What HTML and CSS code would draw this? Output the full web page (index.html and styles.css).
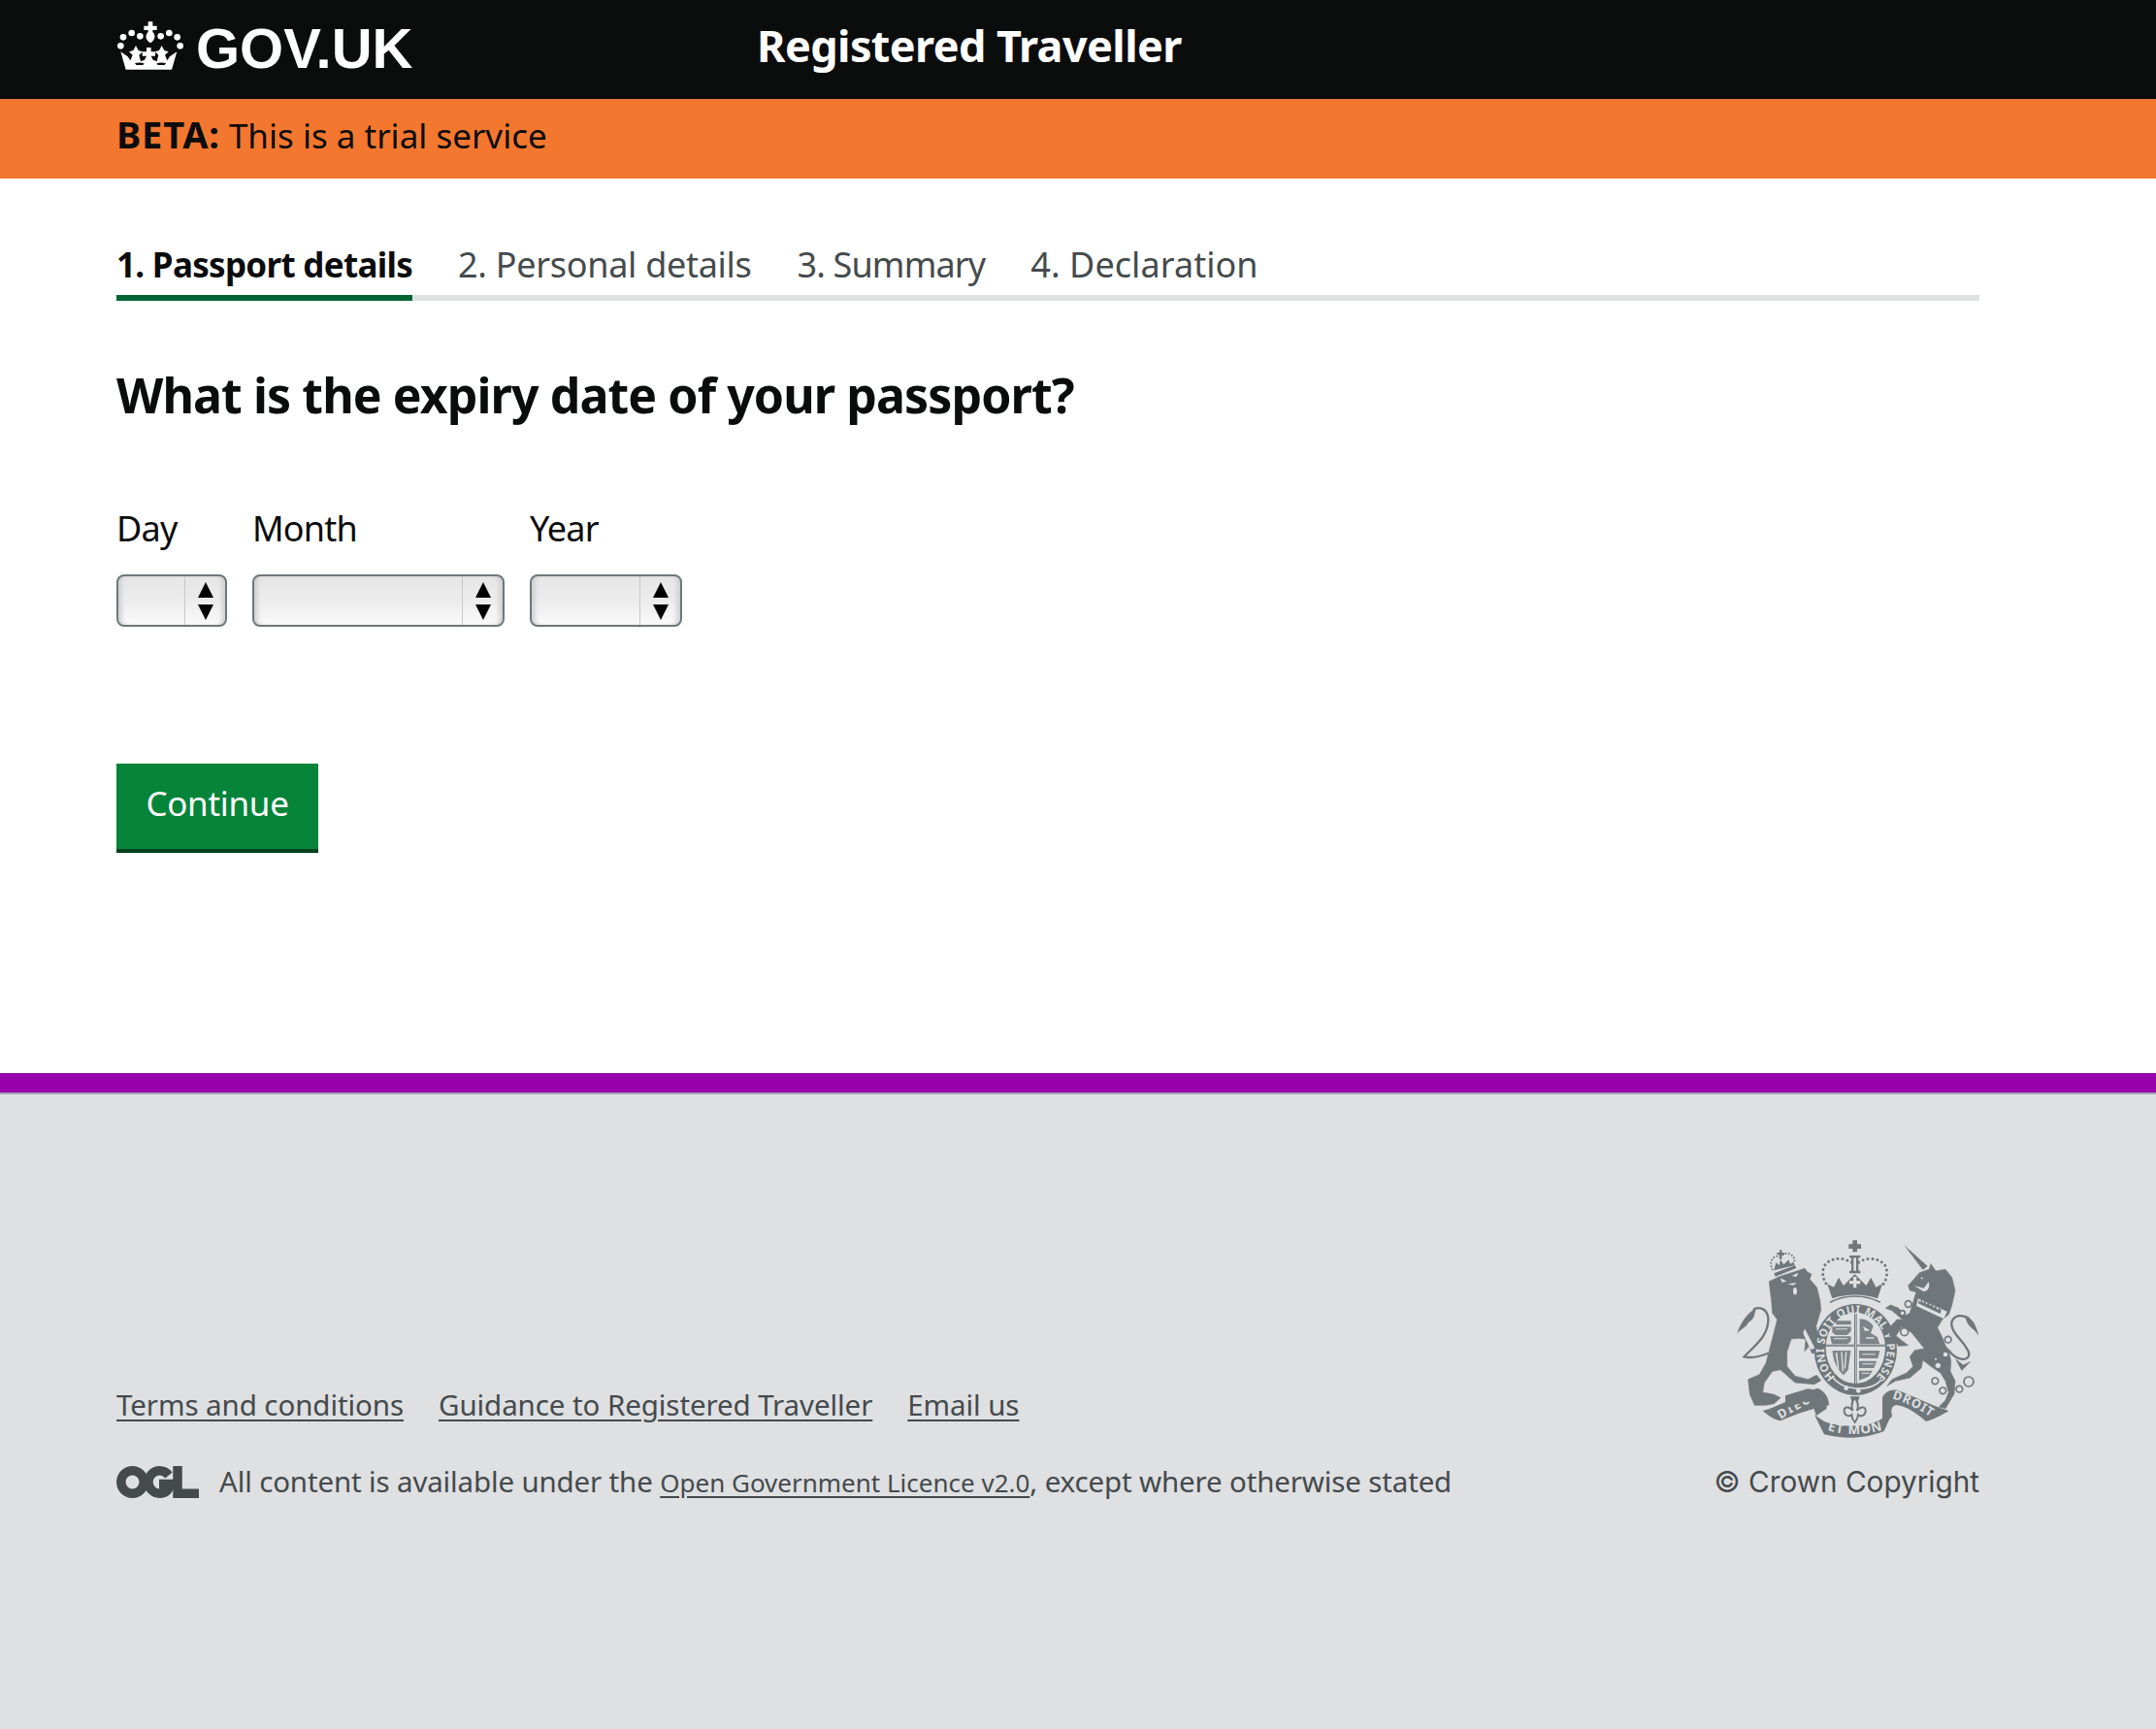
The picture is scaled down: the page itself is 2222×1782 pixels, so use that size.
FILE: index.html
```html
<!DOCTYPE html>
<html lang="en">
<head>
<meta charset="utf-8">
<title>Registered Traveller</title>
<link rel="stylesheet" href="styles.css">
</head>
<body>
<header class="masthead">
  <div class="brand">
    <svg class="crown" viewBox="0 0 240 195" aria-hidden="true">
      <g fill="#fff">
        <circle cx="28" cy="97" r="10"/><circle cx="36" cy="70" r="10"/><circle cx="62" cy="57" r="10"/><circle cx="88" cy="67" r="10"/>
        <circle cx="152" cy="67" r="10"/><circle cx="178" cy="57" r="10"/><circle cx="203" cy="70" r="10"/><circle cx="212" cy="97" r="10"/>
        <path d="M113 22h14v13h13v13h-13v6c9 8 10 24-7 34-17-10-16-26-7-34v-6h-13V35h13z"/>
        <path d="M28 115l22 15 8 12 7-17-11-10 13-4 8-15 8 15 13 4-11 10 5 20 12-5 6-12h-13V115h13v-13h14v13h13v13h-13l6 12 12 5 5-20-11-10 13-4 8-15 8 15 13 4-11 10 7 17 8-12 22-15-16 55H44z"/>
      </g>
      <path fill="#0b0c0c" d="M72 150c12-3 22-2 30 2l-6 4H76zM168 150c-12-3-22-2-30 2l6 4h20z"/>
    </svg>
    <span class="wordmark">GOV.UK</span>
  </div>
  <div class="service">Registered Traveller</div>
</header>

<div class="phase"><strong>BETA:</strong> This is a trial service</div>

<main class="content">
  <nav class="tabs">
    <a class="tab tab-active">1. Passport details</a>
    <a class="tab">2. Personal details</a>
    <a class="tab tab-summary">3. Summary</a>
    <a class="tab tab-declaration">4. Declaration</a>
  </nav>
  <h1 class="question">What is the expiry date of your passport?</h1>
  <form class="date-form">
    <div class="field">
      <label class="field-label">Day</label>
      <div class="select select-day"><span class="select-body"></span><span class="select-arrows"><i class="up"></i><i class="down"></i></span></div>
    </div>
    <div class="field">
      <label class="field-label">Month</label>
      <div class="select select-month"><span class="select-body"></span><span class="select-arrows"><i class="up"></i><i class="down"></i></span></div>
    </div>
    <div class="field">
      <label class="field-label">Year</label>
      <div class="select select-year"><span class="select-body"></span><span class="select-arrows"><i class="up"></i><i class="down"></i></span></div>
    </div>
  </form>
  <button class="continue" type="button">Continue</button>
</main>

<footer class="footer">
  <div class="footer-inner">
    <div class="footer-left">
      <ul class="footer-links">
        <li><a>Terms and conditions</a></li>
        <li><a>Guidance to Registered Traveller</a></li>
        <li><a>Email us</a></li>
      </ul>
      <div class="licence">
        <svg class="ogl" viewBox="0 0 85 33" aria-hidden="true">
          <g fill="none" stroke="#454a4c" stroke-width="9.5">
            <circle cx="16.5" cy="16.5" r="11.7"/>
            <path d="M54 9.5C51.5 6.5 48.5 4.8 44.5 4.8 38 4.8 33 10 33 16.5S38 28.2 44.5 28.2c6 0 10-3.5 10.5-9.7H44"/>
            <path d="M63 0v28.2h22"/>
          </g>
        </svg>
        <p class="licence-text">All content is available under the <a class="licence-link">Open Government Licence v2.0</a>, except where otherwise stated</p>
      </div>
    </div>
    <div class="footer-right">
      <svg class="arms" viewBox="0 0 255 210" aria-hidden="true">
        <defs>
          <path id="ring" d="M94 448A97 112 0 1 1 220 448"/>
          <path id="dieu" d="M150 548C185 527 225 505 262 488"/>
          <path id="etmon" d="M70 612C120 628 190 628 242 610"/>
          <path id="droit" d="M30 484C70 495 120 520 158 548"/>
        </defs>

        <!-- lion -->
        <g transform="translate(0 5) scale(.3333)">
          <g class="ink">
            <path class="soft" d="M115 122L150 106 195 92 225 82 232 92 246 100 240 115 262 140 272 180 275 210 260 260 268 300 296 345 278 352 262 340 248 345 238 322 225 338 228 300 205 298 183 300 170 340 170 385 195 415 235 425 262 412 275 428 255 440 195 435 150 395 125 400 100 435 95 465 130 472 150 482 130 500 105 505 70 505 55 470 50 425 85 410 105 375 130 280 140 240 125 220 122 180 118 150Z"/>
            <path d="M130 88L136 64 146 72 150 55 160 70 175 55 180 68 190 62 194 72Z"/>
            <path d="M130 97L195 72 199 81 134 107Z"/>
            <path d="M147 25h7v8h8v7h-8v14h-7V40h-8v-7h8z"/>
            <path d="M75 205C55 215 30 240 15 285 25 270 45 265 50 250 55 245 68 240 70 222Z"/>
            <path d="M95 522C145 510 205 470 265 452 285 460 300 480 300 505L255 515C240 520 200 530 150 553 130 550 110 535 95 522Z"/>
          </g>
          <path class="line" stroke-width="7" d="M110 345C85 355 60 360 38 355 70 320 115 290 112 235 108 205 85 200 68 208"/>
          <path class="dots" d="M125 85C112 60 130 38 150 45 165 28 200 35 192 68"/>
          <g class="paper">
            <path d="M150 112l20 10-16 3zM185 105l20-10-6 13zM172 130l28-4-10 8z"/>
            <ellipse cx="195" cy="152" rx="6" ry="11"/>
            <path d="M225 268l32 62-15 2-22-50z"/>
          </g>
          <text class="scroll-text"><textPath href="#dieu" textLength="110" lengthAdjust="spacing">DIEU</textPath></text>
        </g>

        <!-- shield, crown, motto -->
        <g transform="translate(75 -5) scale(.3333)">
          <g class="ink">
            <path d="M148 25h14v12h12v14h-12v10h-14V51h-12V37h12z"/>
            <path d="M138 72h34v7h-34zM144 79h7v40h-7zM159 79h7v40h-7zM138 119h34v8h-34z"/>
            <path d="M70 160l20 10 15-30 15 25 35-35 35 35 15-25 15 30 20-10-15 45c-45-15-95-15-140 0z"/>
            <path d="M150 138h10v12h12v10h-12v12h-10v-12h-12v-10h12z" class="paper"/>
            <ellipse cx="157" cy="363" rx="128" ry="141"/>
            <path d="M30 565l30 20c50 20 140 20 180-10l30-15-25 55c-65 25-125 25-185 10z"/>
            <path d="M-60 505L5 485c35-3 65 25 63 60L35 568c-7-38-25-53-40-43L-60 545z"/>
            <path d="M140 508h30l-6 16h-18z"/>
          </g>
          <path class="paper" d="M82 214c45-22 100-22 148 0l-12 14c-38-14-86-14-124 0z"/>
          <path class="line" stroke-width="5" d="M80 216c45-24 105-24 152 0"/>
          <path class="dots dots-big" d="M145 93C120 78 80 75 60 105 50 130 60 155 75 170"/>
          <path class="dots dots-big" d="M167 93C190 78 230 75 250 105 260 130 250 155 235 170"/>
          <ellipse class="paper" cx="157" cy="358" rx="92" ry="110"/>
          <g class="ink tint">
            <path d="M85 292h58v14l-12 12H96l-11-8zM78 322h65v14l-10 10H84zM92 274h51v12H98z"/>
            <path d="M170 268c20 0 34 10 42 22l-8 22 20 12 8 22h-62z"/>
            <path d="M86 366h56l-8 60-14 16c-20-18-34-48-34-76z"/>
            <path d="M168 366h64l-6 24h-58zM168 398h54l-8 22h-46zM168 428h42l-12 18-30 12z"/>
          </g>
          <g class="paper">
            <path d="M96 298h36v3H96zM90 328h42v3H90zM180 290l22 14-16 2zM190 325h24v4h-24zM178 376h40v3h-40zM178 406h36v3h-36zM176 434h24v3h-24zM100 372l6 50-4 1-7-50zM116 370l4 60-4 1-4-61zM130 370l-4 52-4-1 4-51z"/>
          </g>
          <path class="ink" d="M153 252h8v216h-8zM66 347h182v7H66z"/>
          <path class="paper" d="M156 252h2v216h-2zM66 350h182v2H66z"/>
          <path class="line light" stroke-width="5" d="M86 448c28 40 110 50 150 10"/>
          <circle class="paper" cx="128" cy="482" r="7"/><circle class="paper" cx="166" cy="490" r="7"/>
          <path class="fleur" d="M155 512C165 525 168 538 161 552 175 535 190 540 188 555 186 570 170 570 165 565 165 575 160 582 155 588 150 582 145 575 145 565 140 570 124 570 122 555 120 540 135 535 149 552 142 538 145 525 155 512Z"/>
          <text class="ring-text"><textPath href="#ring" textLength="515" lengthAdjust="spacing">HONI SOIT QUI MAL Y PENSE</textPath></text>
          <text class="scroll-text scroll-big"><textPath href="#etmon" textLength="172" lengthAdjust="spacing">ET MON</textPath></text>
        </g>

        <!-- unicorn -->
        <g transform="translate(155 5) scale(.3333)">
          <g class="ink">
            <path d="M67 10L140 75 125 86Z"/>
            <path class="soft" d="M80 135L115 95 145 85 150 68 165 90 195 85 215 110 225 150 215 195 205 225 185 240 170 265 185 295 195 320 205 335 212 370 210 400 225 430 222 470 210 490 195 515 175 510 195 490 205 465 195 430 180 405 150 385 125 365 120 390 85 420 40 430 15 445 30 425 75 405 95 385 85 355 100 335 130 330 90 280 60 262 42 290 60 305 80 320 50 322 22 290 25 262 45 240 62 240 30 212 10 205 25 195 50 205 70 228 85 220 100 170 105 155 85 150Z"/>
            <path d="M255 228C280 235 290 260 298 290 285 270 270 265 262 250Z"/>
            <path d="M225 360L245 398 275 368 250 380Z"/>
            <path d="M0 482C5 465 25 455 45 458 95 475 150 505 205 522 185 535 155 550 135 555 110 530 60 500 40 505 30 508 25 520 30 540L0 565Z"/>
          </g>
          <path class="line" stroke-width="7" d="M205 335C230 370 270 370 268 345 260 310 205 280 215 245 225 225 245 225 265 235"/>
          <path class="paper" d="M110 175L200 215 190 238 105 198Z"/>
          <path class="ink" d="M113 178l4 10 4-12 5 14 6-10 4 14 8-10 3 14 8-8 3 14 8-7 3 13 8-6 5 8-3 10-68-32z"/>
          <g class="paper">
            <circle cx="172" cy="382" r="8"/><circle cx="195" cy="348" r="7"/><circle cx="165" cy="362" r="3"/><circle cx="122" cy="112" r="3"/>
            <path d="M98 135l30 8 15-20c6 18-4 30-16 30z"/>
          </g>
          <g class="ring-link">
            <circle cx="80" cy="192" r="10"/><circle cx="62" cy="220" r="8"/><circle cx="68" cy="278" r="12"/><circle cx="203" cy="302" r="10"/>
            <circle cx="163" cy="430" r="10"/><circle cx="187" cy="460" r="10"/><circle cx="238" cy="455" r="10"/><circle cx="267" cy="432" r="15"/>
          </g>
          <text class="scroll-text"><textPath href="#droit" textLength="132" lengthAdjust="spacing">DROIT</textPath></text>
        </g>
      </svg>
      <p class="copyright">© Crown Copyright</p>
    </div>
  </div>
</footer>
</body>
</html>
```
FILE: styles.css
```css
* { box-sizing: border-box; }
html, body { margin: 0; padding: 0; }
body {
  min-height: 1782px;
  display: flex;
  flex-direction: column;
  background: #fff;
  color: #0b0c0c;
  font-family: "Noto Sans", "Open Sans", sans-serif;
}
.masthead {
  height: 102px;
  background: #0b0c0c;
  color: #fff;
  padding-left: 120px;
  display: flex;
  align-items: center;
}
.brand { display: flex; align-items: center; width: 660px; }
.crown { width: 80px; height: 65px; margin: -7px 7px 0 -5px; }
.wordmark { font-family: "Liberation Sans", Arial, sans-serif; font-weight: 700; font-size: 58px; line-height: 1; margin-top: -3px; }
.service { font-size: 45px; font-weight: 700; letter-spacing: -0.6px; margin-top: -9px; }
.phase {
  height: 82px;
  background: #f47730;
  padding-left: 120px;
  font-size: 35px;
  line-height: 72px;
}
.phase strong { font-weight: 700; font-size: 38px; letter-spacing: 0.8px; }
.content {
  flex: 0 0 922px;
  padding: 0 182px 0 120px;
}
.tabs {
  display: flex;
  margin-top: 60px;
  height: 66px;
  border-bottom: 6px solid #dee0e2;
  gap: 47px;
}
.tab {
  height: 66px;
  font-size: 36px;
  line-height: 58px;
  letter-spacing: -0.3px;
  color: #454a4c;
}
.tab-summary { letter-spacing: -0.85px; }
.tab-declaration { letter-spacing: 0.05px; }
.tab-active { font-weight: 700; font-size: 35px; color: #0b0c0c; border-bottom: 6px solid #006435; letter-spacing: -0.7px; }
.question {
  margin: 62px 0 0;
  font-size: 50px;
  line-height: 70px;
  font-weight: 700;
  letter-spacing: -0.9px;
}
.date-form { display: flex; gap: 26px; margin-top: 79px; }
.field { display: flex; flex-direction: column; }
.field-label { font-size: 36px; line-height: 48px; letter-spacing: -0.8px; margin-bottom: 23px; }
.select {
  height: 54px;
  display: flex;
  border: 2px solid #6f777b;
  border-radius: 8px;
  background: linear-gradient(#e6e6e6, #ececec 50%, #fafafa);
  box-shadow: inset 6px 0 5px -3px #ccc, inset -6px 0 5px -3px #ccc;
}
.select-day { width: 114px; }
.select-month { width: 260px; }
.select-year { width: 157px; }
.select-body { flex: 1; }
.select-arrows {
  width: 42px;
  border-left: 1px solid #c8c8c8;
  display: flex;
  flex-direction: column;
  align-items: center;
  justify-content: center;
  gap: 7px;
}
.up, .down { width: 0; height: 0; border-left: 8.5px solid transparent; border-right: 8.5px solid transparent; }
.up { border-bottom: 16px solid #000; }
.down { border-top: 16px solid #000; }
.continue {
  display: block;
  margin-top: 141px;
  width: 208px;
  height: 92px;
  padding: 0 0 8px;
  border: 0;
  border-bottom: 4px solid #00401d;
  background: #06853a;
  color: #fff;
  font-family: inherit;
  font-size: 35px;
  letter-spacing: -0.3px;
}
.footer {
  flex: 1;
  background: #dee0e2;
  border-top: 20px solid #9700ab;
  box-shadow: inset 0 2px 0 #a1acb2;
  padding: 149px 182px 0 120px;
}
.footer-inner { display: flex; justify-content: space-between; align-items: flex-start; color: #454a4c; }
.footer-left { padding-top: 150px; }
.footer-links { list-style: none; margin: 0; padding: 0; display: flex; gap: 36px; font-size: 29.5px; line-height: 46px; letter-spacing: -0.08px; }
.footer-links a { text-decoration: underline; text-underline-offset: 4px; }
.licence { display: flex; align-items: center; margin-top: 33px; gap: 21px; }
.ogl { width: 85px; height: 33px; }
.licence-text { margin: 0; font-size: 29.5px; line-height: 46px; letter-spacing: -0.15px; }
.licence-link { font-size: 26px; letter-spacing: 0; text-decoration: underline; text-underline-offset: 4px; }
.footer-right { display: flex; flex-direction: column; align-items: flex-end; }
.arms { width: 255px; height: 210px; display: block; overflow: visible; }
.copyright { margin: 22px 0 0; font-family: Inter, "Noto Sans", sans-serif; font-size: 29.7px; line-height: 40px; }
.ink path, .ink ellipse { fill: #6f777b; }
.ink { fill: #6f777b; }
.ink .paper { fill: #dee0e2; }
.soft { stroke: #6f777b; stroke-width: 2; stroke-linejoin: round; }
.tint path { fill: #7d8589; }
.paper { fill: #dee0e2; }
.line { fill: none; stroke: #6f777b; stroke-linecap: round; }
.line.light { stroke: #dee0e2; }
.dots { fill: none; stroke: #6f777b; stroke-width: 6; stroke-linecap: round; stroke-dasharray: 0 10; }
.dots-big { stroke-width: 9; stroke-dasharray: 0 15; }
.fleur { fill: #dee0e2; stroke: #6f777b; stroke-width: 6; }
.ring-link { fill: #dee0e2; stroke: #6f777b; stroke-width: 5; }
.ring-text { font: 700 34px "Noto Sans", sans-serif; fill: #dee0e2; }
.scroll-text { font: 700 38px "Noto Sans", sans-serif; fill: #dee0e2; }
.scroll-big { font-size: 40px; }
```
